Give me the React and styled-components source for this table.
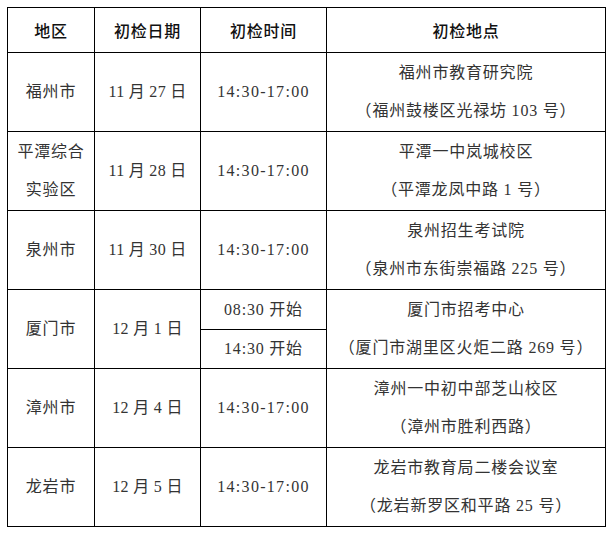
import React from "react"
import styled, { createGlobalStyle } from "styled-components"

const GlobalStyle = createGlobalStyle`
  body {
    margin: 0;
    padding: 7px 0 0 7px;
    background: #fff;
  }
`

const Table = styled.table`
  border-collapse: collapse;
  width: 598px;
  table-layout: fixed;
  font-family: "Liberation Serif", "Noto Sans CJK SC", serif;
  font-size: 16px;
  color: #333;
  letter-spacing: 0.8px;

  td, th {
    border: 1px solid #000;
    text-align: center;
    vertical-align: middle;
    padding: 0;
  }
`

const HeadCell = styled.th`
  height: 44px;
  font-family: "Noto Sans CJK SC", sans-serif;
  font-weight: 500;
  font-size: 16px;
  color: #111;
`

const Cell = styled.td`
  height: ${p => p.$h || 78}px;
  line-height: 38px;
  letter-spacing: ${p => p.$ls || 0.8}px;
`

const rows = [
  { area: ["福州市"], date: "11 月 27 日", time: "14:30-17:00", place: "福州市教育研究院", addr: "（福州鼓楼区光禄坊 103 号）" },
  { area: ["平潭综合", "实验区"], date: "11 月 28 日", time: "14:30-17:00", place: "平潭一中岚城校区", addr: "（平潭龙凤中路 1 号）" },
  { area: ["泉州市"], date: "11 月 30 日", time: "14:30-17:00", place: "泉州招生考试院", addr: "（泉州市东街崇福路 225 号）" },
  { area: ["厦门市"], date: "12 月 1 日", time: ["08:30 开始", "14:30 开始"], place: "厦门市招考中心", addr: "（厦门市湖里区火炬二路 269 号）" },
  { area: ["漳州市"], date: "12 月 4 日", time: "14:30-17:00", place: "漳州一中初中部芝山校区", addr: "（漳州市胜利西路）" },
  { area: ["龙岩市"], date: "12 月 5 日", time: "14:30-17:00", place: "龙岩市教育局二楼会议室", addr: "（龙岩新罗区和平路 25 号）" },
]

const Lines = ({ items }) => items.map((t, i) => <div key={i}>{t}</div>)

const Row = ({ r }) => {
  if (Array.isArray(r.time)) {
    return (
      <>
        <tr>
          <Cell rowSpan={2}><Lines items={r.area} /></Cell>
          <Cell rowSpan={2} $ls={0.3}>{r.date}</Cell>
          <Cell $h={39}>{r.time[0]}</Cell>
          <Cell rowSpan={2}><Lines items={[r.place, r.addr]} /></Cell>
        </tr>
        <tr>
          <Cell $h={38}>{r.time[1]}</Cell>
        </tr>
      </>
    )
  }
  return (
    <tr>
      <Cell><Lines items={r.area} /></Cell>
      <Cell $ls={0.3}>{r.date}</Cell>
      <Cell $ls={1.3}>{r.time}</Cell>
      <Cell><Lines items={[r.place, r.addr]} /></Cell>
    </tr>
  )
}

export default function App() {
  return (
    <>
      <GlobalStyle />
      <Table>
        <colgroup>
          <col style={{ width: 87 }} />
          <col style={{ width: 106 }} />
          <col style={{ width: 126 }} />
          <col style={{ width: 279 }} />
        </colgroup>
        <thead>
          <tr>
            <HeadCell>地区</HeadCell>
            <HeadCell>初检日期</HeadCell>
            <HeadCell>初检时间</HeadCell>
            <HeadCell>初检地点</HeadCell>
          </tr>
        </thead>
        <tbody>
          {rows.map((r, i) => <Row key={i} r={r} />)}
        </tbody>
      </Table>
    </>
  )
}
